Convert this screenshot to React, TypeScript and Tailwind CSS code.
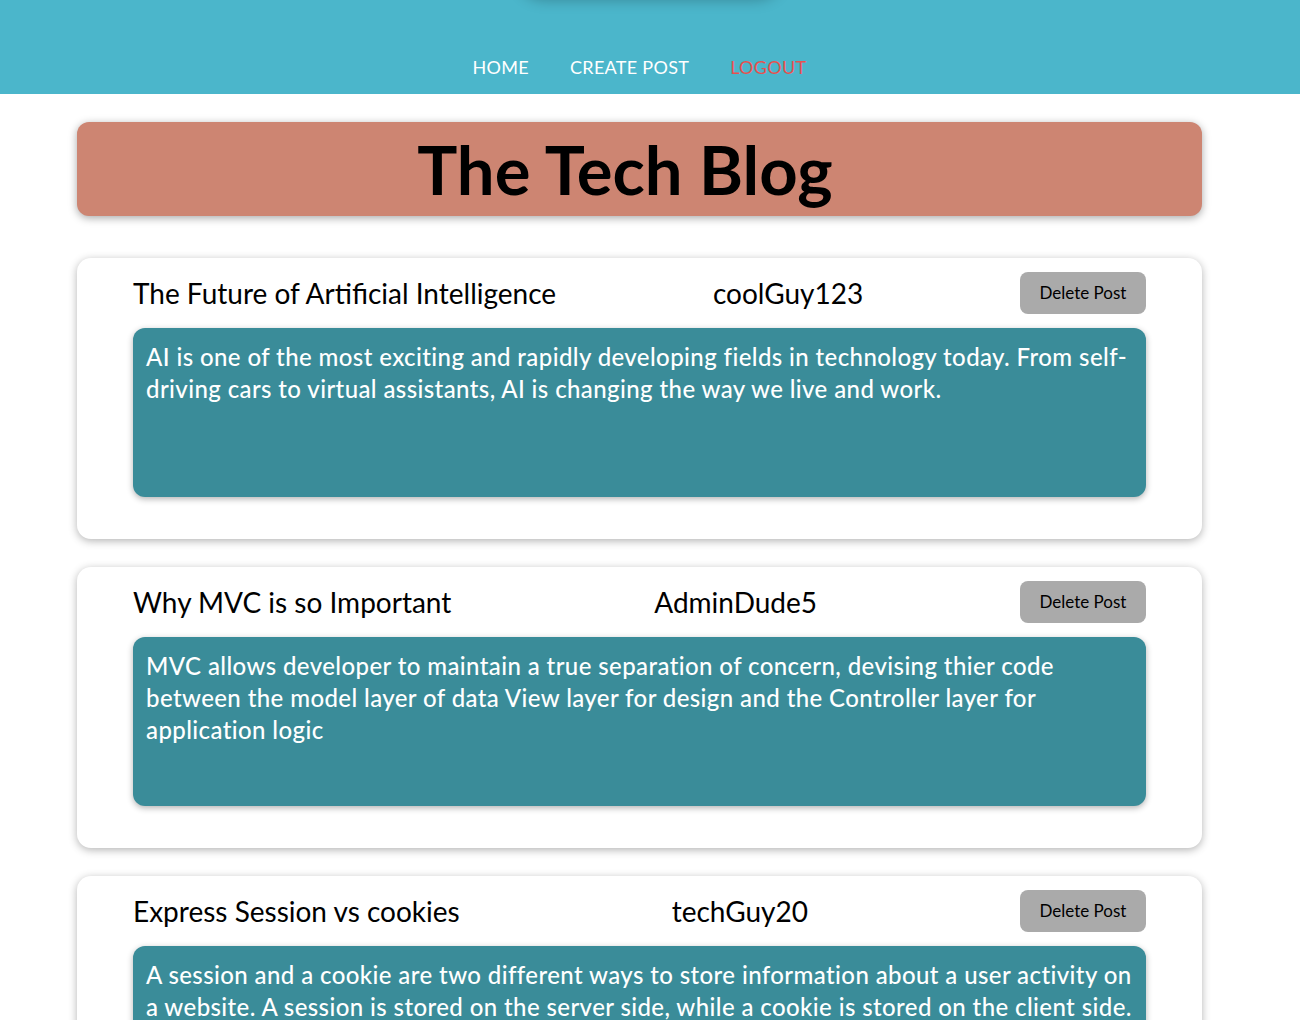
const posts = [
  {
    title: 'The Future of Artificial Intelligence',
    author: 'coolGuy123',
    body: 'AI is one of the most exciting and rapidly developing fields in technology today. From self-driving cars to virtual assistants, AI is changing the way we live and work.',
  },
  {
    title: 'Why MVC is so Important',
    author: 'AdminDude5',
    body: 'MVC allows developer to maintain a true separation of concern, devising thier code between the model layer of data View layer for design and the Controller layer for application logic',
  },
  {
    title: 'Express Session vs cookies',
    author: 'techGuy20',
    body: 'A session and a cookie are two different ways to store information about a user activity on a website. A session is stored on the server side, while a cookie is stored on the client side.',
  },
];

function PostCard({ title, author, body }: { title: string; author: string; body: string }) {
  return (
    <div className="bg-white rounded-[14px] shadow-[0_2px_8px_rgba(0,0,0,0.3)] pt-[14px] pb-[42px] px-[56px]">
      <div className="flex items-center justify-between h-[42px]">
        <h2 className="text-[28px] leading-none text-black">{title}</h2>
        <span className="text-[28px] leading-none text-black">{author}</span>
        <button className="bg-[#aaaaaa] rounded-[8px] w-[126px] h-[42px] text-[17px] text-black">Delete Post</button>
      </div>
      <div className="mt-[14px] bg-[#3a8c99] rounded-[12px] shadow-[0_2px_6px_rgba(0,0,0,0.3)] h-[169px] pl-[13px] pr-[8px] pt-[13px]">
        <p className="text-white text-[24px] leading-[32px] font-medium tracking-[0.4px]">{body}</p>
      </div>
    </div>
  );
}

export default function App() {
  return (
    <div className="min-h-screen bg-white overflow-hidden" style={{ fontFamily: 'Lato, "Noto Sans", sans-serif' }}>
      <header className="relative bg-[#4bb6cb] h-[94px] overflow-hidden">
        <div className="absolute left-[515px] top-[-60px] w-[270px] h-[60px] rounded-full shadow-[0_0_14px_rgba(0,0,0,0.25)] bg-[#4bb6cb]" />
        <nav className="w-[1279px] flex justify-center gap-[41px] pt-[56px] text-[18px] leading-[22px] tracking-[0.3px]">
          <a className="text-white">HOME</a>
          <a className="text-white">CREATE POST</a>
          <a className="text-[#e8514f]">LOGOUT</a>
        </nav>
      </header>
      <main className="w-[1279px] px-[77px] pt-[28px] pb-10 flex flex-col">
        <div className="bg-[#cd8572] rounded-[12px] shadow-[0_2px_8px_rgba(0,0,0,0.35)] h-[94px] flex items-center justify-center pr-[29px]">
          <h1 className="text-[67px] font-bold leading-none text-black">The Tech Blog</h1>
        </div>
        <div className="mt-[42px] flex flex-col gap-[28px]">
          {posts.map((p) => (
            <PostCard key={p.title} {...p} />
          ))}
        </div>
      </main>
    </div>
  );
}
